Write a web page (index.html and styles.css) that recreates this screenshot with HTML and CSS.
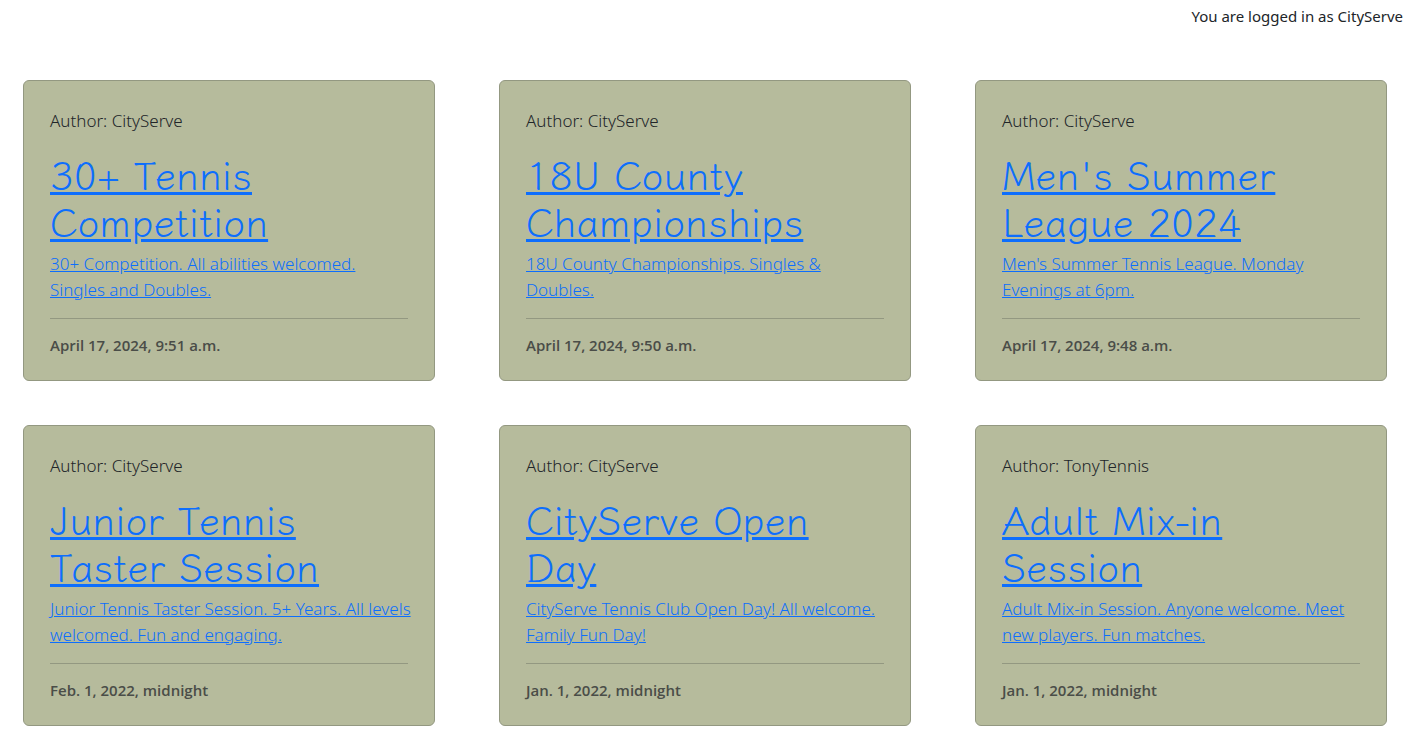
FILE: index.html
```html
<!DOCTYPE html>
<html lang="en">
<head>
<meta charset="utf-8">
<meta name="viewport" content="width=device-width, initial-scale=1">
<title>CityServe</title>
<link rel="stylesheet" href="styles.css">
</head>
<body>
<header class="status">You are logged in as CityServe</header>
<main class="posts">
  <article class="card">
    <p class="author">Author: CityServe</p>
    <a class="post-link" href="#"><h2 class="title">30+ Tennis Competition</h2><p class="excerpt">30+ Competition. All abilities welcomed.<br>Singles and Doubles.</p></a>
    <hr class="rule">
    <p class="date">April 17, 2024, 9:51 a.m.</p>
  </article>
  <article class="card">
    <p class="author">Author: CityServe</p>
    <a class="post-link" href="#"><h2 class="title">18U County Championships</h2><p class="excerpt">18U County Championships. Singles &amp;<br>Doubles.</p></a>
    <hr class="rule">
    <p class="date">April 17, 2024, 9:50 a.m.</p>
  </article>
  <article class="card">
    <p class="author">Author: CityServe</p>
    <a class="post-link" href="#"><h2 class="title">Men's Summer League 2024</h2><p class="excerpt">Men's Summer Tennis League. Monday<br>Evenings at 6pm.</p></a>
    <hr class="rule">
    <p class="date">April 17, 2024, 9:48 a.m.</p>
  </article>
  <article class="card">
    <p class="author">Author: CityServe</p>
    <a class="post-link" href="#"><h2 class="title">Junior Tennis Taster Session</h2><p class="excerpt">Junior Tennis Taster Session. 5+ Years. All levels<br>welcomed. Fun and engaging.</p></a>
    <hr class="rule">
    <p class="date">Feb. 1, 2022, midnight</p>
  </article>
  <article class="card">
    <p class="author">Author: CityServe</p>
    <a class="post-link" href="#"><h2 class="title">CityServe Open Day</h2><p class="excerpt">CityServe Tennis Club Open Day! All welcome.<br>Family Fun Day!</p></a>
    <hr class="rule">
    <p class="date">Jan. 1, 2022, midnight</p>
  </article>
  <article class="card">
    <p class="author">Author: TonyTennis</p>
    <a class="post-link" href="#"><h2 class="title">Adult Mix-in Session</h2><p class="excerpt">Adult Mix-in Session. Anyone welcome. Meet<br>new players. Fun matches.</p></a>
    <hr class="rule">
    <p class="date">Jan. 1, 2022, midnight</p>
  </article>
</main>
</body>
</html>
```

FILE: styles.css
```css
* { box-sizing: border-box; }
body {
  margin: 0;
  background: #fff;
  color: #212529;
  font-family: "Segoe UI", "Noto Sans", sans-serif;
  font-size: 15px;
  line-height: 24px;
}
p, h2 { margin: 0; }
.status {
  padding: 4px 10px;
  text-align: right;
}
.posts {
  display: grid;
  grid-template-columns: repeat(3, minmax(0, 1fr));
  gap: 44px 64px;
  padding: 48px 26px 16px 23px;
}
.card {
  padding: 27px 26px 23px;
  border: 1px solid #939881;
  border-radius: 6px;
  background: #b6bb9c;
}
.author {
  margin-bottom: 16px;
  font-size: 17px;
  font-weight: 300;
  line-height: 26px;
}
.post-link {
  display: block;
  color: #0d6efd;
  text-decoration: underline;
}
.title {
  font-family: "Klee One", "Playpen Sans", Lato, sans-serif;
  font-size: 39px;
  font-weight: 300;
  line-height: 47px;
}
.excerpt {
  margin-top: 7px;
  font-size: 17px;
  font-weight: 300;
  line-height: 26px;
  white-space: nowrap;
}
.rule {
  margin: 15px 0 14px;
  border: 0;
  border-top: 1px solid #939881;
}
.date {
  font-family: "Segoe UI", "Open Sans", sans-serif;
  font-weight: 600;
  color: #4a4d48;
}
```
